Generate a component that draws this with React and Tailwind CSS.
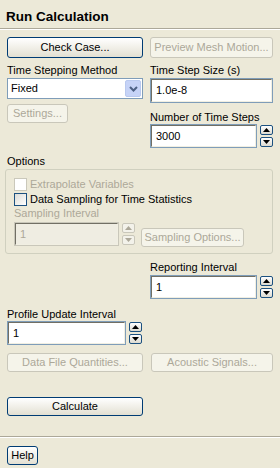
import { useState } from 'react'

function Btn({ children, disabled, className = '' }) {
  return (
    <button
      type="button"
      disabled={disabled}
      className={
        'flex items-center justify-center rounded-[3px] border leading-none ' +
        (disabled
          ? 'border-[#c9c7ba] bg-[#f5f4ea] text-[#aca899] '
          : 'border-[#003c74] bg-gradient-to-b from-white to-[#e3e0d2] text-black ') +
        className
      }
    >
      {children}
    </button>
  )
}

function Field({ value, disabled, className = '' }) {
  return (
    <div className={'border ' + (disabled ? 'border-[#c9c7ba] ' : 'border-[#7f9db9] ') + className}>
      <div
        className={
          'flex h-full items-center border border-t-[#716f64] border-l-[#716f64] border-r-[#f1efe2] border-b-[#f1efe2] pl-[4px] ' +
          (disabled ? 'bg-[#efede2] text-[#aca899]' : 'bg-white text-black')
        }
      >
        {value}
      </div>
    </div>
  )
}

function Spinner({ disabled }) {
  const box =
    'flex h-[10px] w-[13px] items-center justify-center rounded-[2px] border ' +
    (disabled ? 'border-[#c9c7ba] bg-[#f3f2ea]' : 'border-[#1c5180] bg-gradient-to-b from-white to-[#dcdad0]')
  const fill = disabled ? '#aca899' : '#000'
  return (
    <div className="flex flex-col justify-center gap-[2px]">
      <div className={box}>
        <svg width="7" height="4" viewBox="0 0 7 4">
          <path d="M0 4 L3.5 0 L7 4 Z" fill={fill} />
        </svg>
      </div>
      <div className={box}>
        <svg width="7" height="4" viewBox="0 0 7 4">
          <path d="M0 0 L3.5 4 L7 0 Z" fill={fill} />
        </svg>
      </div>
    </div>
  )
}

function Check({ label, disabled, checked, onChange }) {
  return (
    <label className="flex h-[13px] items-center gap-[3px]">
      <span
        onClick={onChange}
        className={
          'block h-[13px] w-[13px] border ' +
          (disabled ? 'border-[#cac8bb] bg-white' : 'border-[#1c5180] bg-gradient-to-br from-[#dcdcd7] to-white')
        }
      >
        {checked && (
          <svg width="11" height="11" viewBox="0 0 11 11">
            <path d="M2 5 L4.5 7.5 L9 3" stroke="#21a121" strokeWidth="2" fill="none" />
          </svg>
        )}
      </span>
      <span className={disabled ? 'text-[#aca899]' : 'text-black'}>{label}</span>
    </label>
  )
}

function Separator() {
  return <div className="h-[2px] border-t border-t-[#aca899] border-b border-b-white" />
}

export default function App() {
  const [sampling, setSampling] = useState(false)

  return (
    <div className="flex h-[468px] w-[280px] flex-col bg-[#ece9d8] font-['Liberation_Sans',Arial,sans-serif] text-[11px] leading-[13px] text-black">
      <div className="h-[28px] px-[6px] pt-[9px] text-[13.5px] font-bold leading-[16px]">Run Calculation</div>
      <Separator />

      <div className="px-[7px] pt-[7px]">
        <div className="flex gap-[7px]">
          {/* left column */}
          <div className="flex w-[136px] flex-col">
            <Btn className="h-[21px]">Check Case...</Btn>
            <div className="mt-[6px]">Time Stepping Method</div>
            <div className="mt-[1px] flex h-[21px] items-center border border-[#7f9db9] bg-white">
              <span className="flex-1 pl-[3px]">Fixed</span>
              <span className="mr-[1px] flex h-[17px] w-[16px] items-center justify-center rounded-[2px] border border-[#b9c9ef] bg-[#c6d3f7]">
                <svg width="9" height="6" viewBox="0 0 9 6">
                  <path d="M1 1 L4.5 4.5 L8 1" stroke="#4d6185" strokeWidth="2" fill="none" />
                </svg>
              </span>
            </div>
            <Btn disabled className="mt-[5px] h-[19px] w-[61px]">Settings...</Btn>
          </div>

          {/* right column */}
          <div className="flex w-[123px] flex-col">
            <Btn disabled className="h-[21px]">Preview Mesh Motion...</Btn>
            <div className="mt-[6px]">Time Step Size (s)</div>
            <Field value="1.0e-8" className="mt-[1px] h-[25px]" />
            <div className="mt-[8px]">Number of Time Steps</div>
            <div className="flex h-[24px] gap-[3px]">
              <Field value="3000" className="h-full w-[107px]" />
              <Spinner />
            </div>
          </div>
        </div>

        <div className="mt-[7px]">Options</div>
        <div className="-ml-[2px] mt-[1px] rounded-[3px] border border-[#d0d0bf] pb-[7px] pl-[8px] pt-[8px]">
          <Check label="Extrapolate Variables" disabled />
          <div className="mt-[2px]">
            <Check label="Data Sampling for Time Statistics" checked={sampling} onChange={() => setSampling(!sampling)} />
          </div>
          <div className="mt-[1px] text-[#aca899]">Sampling Interval</div>
          <div className="mt-[2px] flex items-end">
            <div className="flex h-[24px] gap-[3px]">
              <Field value="1" disabled className="h-full w-[105px]" />
              <Spinner disabled />
            </div>
            <Btn disabled className="-mb-[1px] ml-[6px] h-[19px] w-[103px]">Sampling Options...</Btn>
          </div>
        </div>

        <div className="mt-[7px] flex justify-end">
          <div className="flex w-[123px] flex-col">
            <div>Reporting Interval</div>
            <div className="mt-[1px] flex h-[24px] gap-[3px]">
              <Field value="1" className="h-full w-[107px]" />
              <Spinner />
            </div>
          </div>
        </div>

        <div className="mt-[9px]">Profile Update Interval</div>
        <div className="flex h-[24px] gap-[3px]">
          <Field value="1" className="h-full w-[119px]" />
          <Spinner />
        </div>

        <div className="mt-[8px] flex gap-[8px]">
          <Btn disabled className="h-[19px] w-[136px]">Data File Quantities...</Btn>
          <Btn disabled className="h-[19px] w-[122px]">Acoustic Signals...</Btn>
        </div>

        <Btn className="mt-[25px] h-[19px] w-[136px]">Calculate</Btn>
      </div>

      <div className="mt-[20px]">
        <Separator />
      </div>
      <div className="px-[7px] pt-[8px]">
        <Btn className="h-[19px] w-[31px]">Help</Btn>
      </div>
    </div>
  )
}
